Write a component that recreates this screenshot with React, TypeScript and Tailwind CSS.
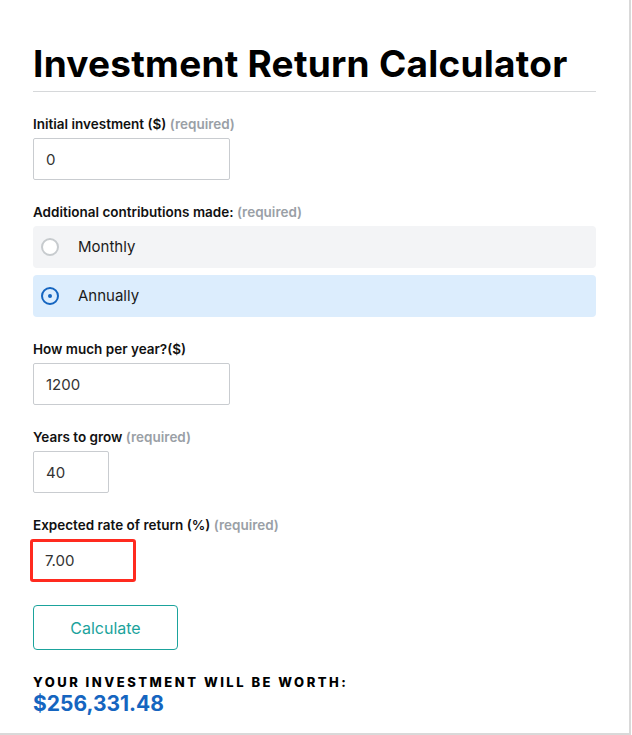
import { useState } from 'react';

// Campo de formulario con etiqueta y marca "(required)"
const Field = ({
  label,
  required,
  children,
}: {
  label: string;
  required?: boolean;
  children: React.ReactNode;
}) => (
  <div className="mt-[23px] first:mt-0">
    <label className="block text-[13.5px] leading-[18px] font-semibold text-[#111] mb-[5px]">
      {label}
      {required && <span className="text-[#9aa0a6] font-semibold"> (required)</span>}
    </label>
    {children}
  </div>
);

const Radio = ({ checked }: { checked: boolean }) =>
  checked ? (
    <span className="flex items-center justify-center w-[18px] h-[18px] rounded-full border-2 border-[#1565c0]">
      <span className="w-[4px] h-[4px] rounded-full bg-[#1565c0]" />
    </span>
  ) : (
    <span className="w-[18px] h-[18px] rounded-full border-2 border-[#c7cbce] bg-white" />
  );

export default function App() {
  const [freq, setFreq] = useState<'monthly' | 'annually'>('annually');

  const inputCls =
    'h-[42px] border border-[#c9ccd0] rounded-[2px] px-[12px] text-[15px] text-[#333] outline-none bg-white';

  return (
    <div
      className="w-[631px] h-[735px] bg-white border-r-2 border-b-2 border-[#d9d9d9]"
      style={{ fontFamily: 'Inter, "Noto Sans", sans-serif' }}
    >
      <div className="px-[33px] pt-[42px] w-[596px] box-content">
        <h1 className="text-[37px] leading-[44px] font-bold text-black tracking-[0.25px]">
          Investment Return Calculator
        </h1>
        <div className="w-[563px] h-px bg-[#d6d8da] mt-[5px] mb-[23px]" />

        <Field label="Initial investment ($)" required>
          <input className={`${inputCls} w-[197px]`} defaultValue="0" />
        </Field>

        <Field label="Additional contributions made:" required>
          <div className="flex flex-col gap-[7px] w-[563px]">
            {(['monthly', 'annually'] as const).map((f) => (
              <button
                key={f}
                onClick={() => setFreq(f)}
                className={`flex items-center gap-[19px] h-[42px] px-[8px] rounded-[4px] text-[15px] text-[#1b1b1b] ${
                  freq === f ? 'bg-[#dcedfd]' : 'bg-[#f3f4f6]'
                }`}
              >
                <Radio checked={freq === f} />
                {f === 'monthly' ? 'Monthly' : 'Annually'}
              </button>
            ))}
          </div>
        </Field>

        <Field label="How much per year?($)">
          <input className={`${inputCls} w-[197px]`} defaultValue="1200" />
        </Field>

        <Field label="Years to grow" required>
          <input className={`${inputCls} w-[76px]`} defaultValue="40" />
        </Field>

        <Field label="Expected rate of return (%)" required>
          <input
            className="h-[43px] w-[106px] -ml-[3px] border-[3px] border-[#ff2a1f] rounded-[3px] px-[12px] text-[15px] text-[#333] outline-none bg-white"
            defaultValue="7.00"
          />
        </Field>

        <button className="mt-[23px] w-[145px] h-[45px] border-[1.5px] border-[#1ba39c] rounded-[4px] text-[16px] text-[#1ba39c] bg-white">
          Calculate
        </button>

        <div className="mt-[23px] text-[13px] leading-[18px] font-extrabold tracking-[2.5px] text-black">
          YOUR INVESTMENT WILL BE WORTH:
        </div>
        <div className="text-[21px] leading-[26px] font-bold text-[#1565c0]">$256,331.48</div>
      </div>
    </div>
  );
}
